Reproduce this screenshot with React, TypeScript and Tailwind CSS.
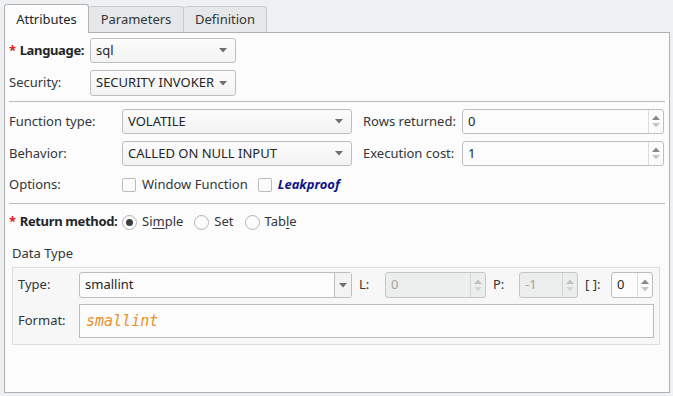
import React from "react";

const FONT = { fontFamily: '"Noto Sans", "Open Sans", sans-serif' };

function DownTri({ color = "#6e6e6e" }: { color?: string }) {
  return (
    <svg width="8" height="5" viewBox="0 0 8 5">
      <polygon points="0,0 8,0 4,4.5" fill={color} />
    </svg>
  );
}

function UpTri({ color }: { color: string }) {
  return (
    <svg width="8" height="5" viewBox="0 0 8 5">
      <polygon points="0,5 8,5 4,0.5" fill={color} />
    </svg>
  );
}

function Combo({ className, text }: { className: string; text: string }) {
  return (
    <div
      className={`flex shrink-0 items-center justify-between rounded-[3px] border border-[#bcbebf] bg-gradient-to-b from-[#fcfcfc] to-[#f3f3f4] pl-[5px] pr-[8px] text-[13px] text-[#232629] ${className}`}
    >
      <span className="whitespace-nowrap">{text}</span>
      <DownTri />
    </div>
  );
}

function Spin({
  className,
  value,
  disabled = false,
}: {
  className: string;
  value: string;
  disabled?: boolean;
}) {
  return (
    <div
      className={`flex shrink-0 items-stretch rounded-[3px] border ${
        disabled ? "border-[#c4c6c8] bg-[#eceded] text-[#a7a39c]" : "border-[#bcbebf] bg-[#fcfcfc] text-[#232629]"
      } text-[13px] ${className}`}
    >
      <div className="flex flex-1 items-center pl-[5px]">{value}</div>
      <div className={`flex w-[15px] flex-col items-center justify-center gap-[3px] border-l ${disabled ? "border-[#d3d4d5]" : "border-[#dcdddd]"}`}>
        <UpTri color={disabled ? "#c2c2c2" : "#8a8a8a"} />
        <DownTri color={disabled ? "#d6d6d6" : "#c6c6c6"} />
      </div>
    </div>
  );
}

function Check({ label, className = "", labelClass = "" }: { label: string; className?: string; labelClass?: string }) {
  return (
    <div className={`flex items-center ${className}`}>
      <div className="h-[14px] w-[14px] rounded-[2px] border border-[#b9bbbd] bg-[#fcfcfc]" />
      <span className={`ml-[6px] whitespace-nowrap ${labelClass}`}>{label}</span>
    </div>
  );
}

function Radio({ checked = false, children, className = "" }: { checked?: boolean; children: React.ReactNode; className?: string }) {
  return (
    <div className={`flex items-center ${className}`}>
      <div className="flex h-[15px] w-[15px] items-center justify-center rounded-full border border-[#b2b4b6] bg-[#fcfcfc]">
        {checked && <div className="h-[7px] w-[7px] rounded-full bg-[#3b3e41]" />}
      </div>
      <span className="ml-[5px] whitespace-nowrap">{children}</span>
    </div>
  );
}

function Star() {
  return <span className="mr-[4px] font-bold text-[#e0201c]">*</span>;
}

export default function App() {
  return (
    <div style={FONT} className="h-[396px] w-[673px] overflow-hidden bg-[#eff0f1] text-[13px] text-[#31363b]">
      <div className="pl-[4px] pr-[3px] pt-[4px]">
        {/* Tabs */}
        <div className="relative z-10 flex h-[29px] items-end">
          <div className="flex h-[29px] w-[85px] items-center justify-center rounded-t-[3px] border border-b-0 border-[#b0b2b4] bg-[#fcfcfc] pt-[1px] text-[#232629]">
            Attributes
          </div>
          <div className="mb-[1px] flex h-[26px] w-[95px] items-center justify-center rounded-t-[3px] border border-b-0 border-l-0 border-[#c9cbcd] bg-[#e6e7e8] text-[#31363b]">
            Parameters
          </div>
          <div className="mb-[1px] flex h-[26px] w-[83px] items-center justify-center rounded-t-[3px] border border-b-0 border-l-0 border-[#c9cbcd] bg-[#e6e7e8] text-[#31363b]">
            Definition
          </div>
        </div>
        {/* Panel */}
        <div className="-mt-px h-[361px] border border-[#aeb0b2] bg-[#fcfcfc] px-[4px] pt-[5px]">
          {/* Language */}
          <div className="flex h-[25px] items-center">
            <div className="w-[81px] shrink-0 whitespace-nowrap font-bold tracking-[-0.35px] text-[#232629]">
              <Star />
              Language:
            </div>
            <Combo className="h-[25px] w-[146px]" text="sql" />
          </div>
          {/* Security */}
          <div className="mt-[7px] flex h-[26px] items-center">
            <div className="w-[81px] shrink-0">Security:</div>
            <Combo className="h-[26px] w-[146px]" text="SECURITY INVOKER" />
          </div>
          <div className="mt-[5px] h-px bg-[#b9bbbd]" />
          {/* Function type */}
          <div className="mt-[7px] flex h-[25px] items-center">
            <div className="w-[113px] shrink-0">Function type:</div>
            <Combo className="h-[25px] w-[230px]" text="VOLATILE" />
            <div className="ml-[11px] w-[99px] shrink-0 whitespace-nowrap">Rows returned:</div>
            <Spin className="h-[25px] w-[202px]" value="0" />
          </div>
          {/* Behavior */}
          <div className="mt-[7px] flex h-[25px] items-center">
            <div className="w-[113px] shrink-0">Behavior:</div>
            <Combo className="h-[25px] w-[230px]" text="CALLED ON NULL INPUT" />
            <div className="ml-[11px] w-[99px] shrink-0 whitespace-nowrap">Execution cost:</div>
            <Spin className="h-[25px] w-[202px]" value="1" />
          </div>
          {/* Options */}
          <div className="mt-[6px] flex h-[25px] items-center">
            <div className="w-[113px] shrink-0">Options:</div>
            <Check label="Window Function" />
            <Check label="Leakproof" className="ml-[10px]" labelClass="font-bold italic text-[#12128a]" />
          </div>
          <div className="mt-[6px] h-px bg-[#b9bbbd]" />
          {/* Return method */}
          <div className="mt-[6px] flex h-[24px] items-center">
            <div className="w-[113px] shrink-0 whitespace-nowrap font-bold tracking-[-0.35px] text-[#232629]">
              <Star />
              Return method:
            </div>
            <Radio checked>
              Si<span className="underline underline-offset-2">m</span>ple
            </Radio>
            <Radio className="ml-[11px]">Set</Radio>
            <Radio className="ml-[11px]">
              Tab<span className="underline underline-offset-2">l</span>e
            </Radio>
          </div>
          {/* Data Type */}
          <div className="ml-[3px] mt-[10px] flex h-[20px] items-center">Data Type</div>
          <div className="ml-[3px] mt-[3px] w-[648px] border border-[#dcdddf] bg-[#f7f7f8] px-[5px] pb-[6px] pt-[4px]">
            <div className="flex h-[26px] items-center">
              <div className="w-[61px] shrink-0">Type:</div>
              <div className="flex h-[26px] w-[273px] shrink-0 items-stretch rounded-[3px] border border-[#bcbebf] bg-[#fcfcfc] text-[#232629]">
                <div className="flex flex-1 items-center pl-[5px]">smallint</div>
                <div className="flex w-[17px] items-center justify-center border-l border-[#bcbebf] bg-[#f3f3f4]">
                  <DownTri />
                </div>
              </div>
              <div className="ml-[7px] w-[26px] shrink-0">L:</div>
              <Spin className="h-[26px] w-[101px]" value="0" disabled />
              <div className="ml-[7px] w-[26px] shrink-0">P:</div>
              <Spin className="h-[26px] w-[59px]" value="-1" disabled />
              <div className="ml-[7px] w-[26px] shrink-0 whitespace-nowrap">[ ]:</div>
              <Spin className="h-[26px] w-[42px]" value="0" />
            </div>
            <div className="mt-[6px] flex h-[34px] items-center">
              <div className="w-[61px] shrink-0">Format:</div>
              <div className="flex h-[34px] flex-1 items-center border border-[#b9bbbd] bg-[#fcfcfc] pl-[6px]">
                <span
                  className="text-[15px] italic text-[#e8902c]"
                  style={{ fontFamily: '"DejaVu Sans Mono", "Liberation Mono", monospace' }}
                >
                  smallint
                </span>
              </div>
            </div>
          </div>
        </div>
      </div>
    </div>
  );
}
